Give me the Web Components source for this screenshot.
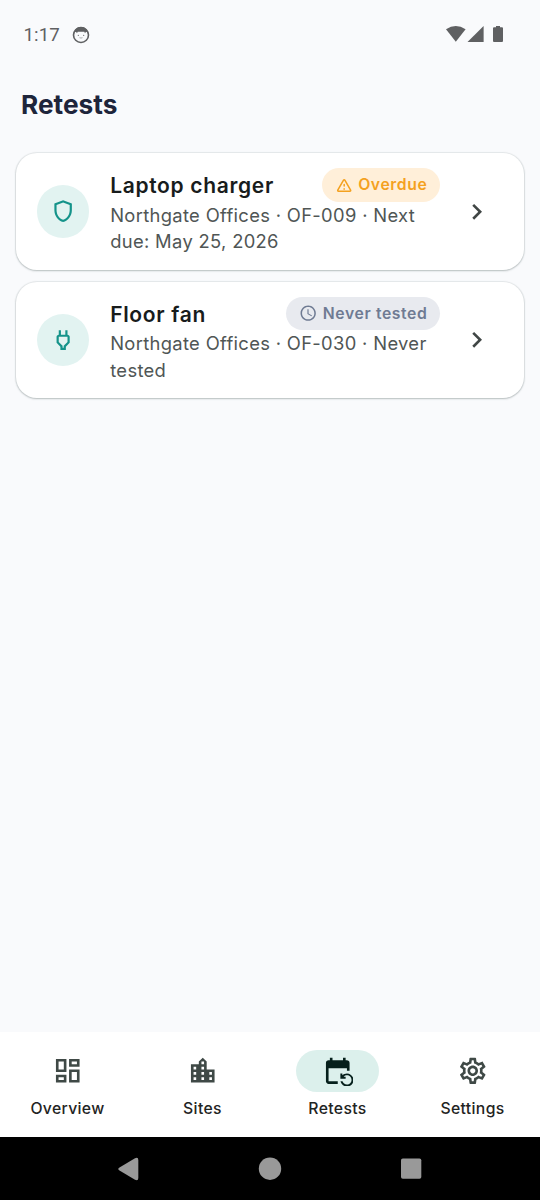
<!DOCTYPE html>
<html lang="en">
<head>
<meta charset="utf-8">
<title>Retests</title>
<style>
html,body{margin:0;height:100%}
body{font-family:Inter,"Liberation Sans",sans-serif;background:#f9fafc;overflow:hidden}
</style>
</head>
<body>
<retest-app></retest-app>
<script>
const ICONS = {
  shield: 'M12 2L4 5v6.09c0 5.05 3.41 9.76 8 10.91 4.59-1.15 8-5.86 8-10.91V5l-8-3zm6 9.09c0 4-2.55 7.7-6 8.83-3.45-1.13-6-4.82-6-8.83v-4.7l6-2.25 6 2.25v4.7z',
  power: 'M16 9v4.66l-3.5 3.51V19h-1v-1.83L8 13.65V9h8m0-6h-2v4h-4V3H8v4h-.01C6.9 6.99 6 7.89 6 8.99v5.52L9.5 18v3h5v-3l3.5-3.51V9c0-1.1-.9-2-2-2V3z',
  warning: 'M12 5.99L19.53 19H4.47L12 5.99M2.74 18c-.77 1.33.19 3 1.73 3h15.06c1.54 0 2.5-1.67 1.73-3L13.73 4.99c-.77-1.33-2.69-1.33-3.46 0L2.74 18zM11 11v2c0 .55.45 1 1 1s1-.45 1-1v-2c0-.55-.45-1-1-1s-1 .45-1 1zm0 5h2v2h-2v-2z',
  schedule: 'M11.99 2C6.47 2 2 6.48 2 12s4.47 10 9.99 10C17.52 22 22 17.52 22 12S17.52 2 11.99 2zM12 20c-4.42 0-8-3.58-8-8s3.58-8 8-8 8 3.58 8 8-3.58 8-8 8zm.5-13H11v6l5.25 3.15.75-1.23-4.5-2.67z',
  chevron: 'M10 6L8.59 7.41 13.17 12l-4.58 4.59L10 18l6-6z',
  dashboard: 'M19 5v2h-4V5h4M9 5v6H5V5h4m10 8v6h-4v-6h4M9 17v2H5v-2h4M21 3h-8v6h8V3zM11 3H3v10h8V3zm10 8h-8v10h8V11zm-10 4H3v6h8v-6z',
  city: 'M15 11V5l-3-3-3 3v2H3v14h18V11h-6zm-8 8H5v-2h2v2zm0-4H5v-2h2v2zm0-4H5V9h2v2zm6 8h-2v-2h2v2zm0-4h-2v-2h2v2zm0-4h-2V9h2v2zm0-4h-2V5h2v2zm6 12h-2v-2h2v2zm0-4h-2v-2h2v2z',
  repeat: 'M21 12V6c0-1.1-.9-2-2-2h-1V2h-2v2H8V2H6v2H5c-1.1 0-2 .9-2 2v14c0 1.1.9 2 2 2h7v-2H5V10h14v2h2zm-5.36 8c.43 1.45 1.77 2.5 3.36 2.5 1.93 0 3.5-1.57 3.5-3.5s-1.57-3.5-3.5-3.5c-.95 0-1.82.38-2.45 1H18V18h-4v-4h1.5v1.43c.9-.88 2.14-1.43 3.5-1.43 2.76 0 5 2.24 5 5s-2.24 5-5 5c-2.42 0-4.44-1.72-4.9-4h1.54z',
  settings: 'M19.43 12.98c.04-.32.07-.64.07-.98 0-.34-.03-.66-.07-.98l2.11-1.65c.19-.15.24-.42.12-.64l-2-3.46c-.09-.16-.26-.25-.44-.25-.06 0-.12.01-.17.03l-2.49 1c-.52-.4-1.08-.73-1.69-.98l-.38-2.65C14.46 2.18 14.25 2 14 2h-4c-.25 0-.46.18-.49.42l-.38 2.65c-.61.25-1.17.59-1.69.98l-2.49-1c-.06-.02-.12-.03-.18-.03-.17 0-.34.09-.43.25l-2 3.46c-.13.22-.07.49.12.64l2.11 1.65c-.04.32-.07.65-.07.98 0 .33.03.66.07.98l-2.11 1.65c-.19.15-.24.42-.12.64l2 3.46c.09.16.26.25.44.25.06 0 .12-.01.17-.03l2.49-1c.52.4 1.08.73 1.69.98l.38 2.65c.03.24.24.42.49.42h4c.25 0 .46-.18.49-.42l.38-2.65c.61-.25 1.17-.59 1.69-.98l2.49 1c.06.02.12.03.18.03.17 0 .34-.09.43-.25l2-3.46c.12-.22.07-.49-.12-.64l-2.11-1.65zm-1.98-1.71c.04.31.05.52.05.73 0 .21-.02.43-.05.73l-.14 1.13.89.7 1.08.84-.7 1.21-1.27-.51-1.04-.42-.9.68c-.43.32-.84.56-1.25.73l-1.06.43-.16 1.13-.2 1.35h-1.4l-.19-1.35-.16-1.13-1.06-.43c-.43-.18-.83-.41-1.23-.71l-.91-.7-1.06.43-1.27.51-.7-1.21 1.08-.84.89-.7-.14-1.13c-.03-.31-.05-.54-.05-.74s.02-.43.05-.73l.14-1.13-.89-.7-1.08-.84.7-1.21 1.27.51 1.04.42.9-.68c.43-.32.84-.56 1.25-.73l1.06-.43.16-1.13.2-1.35h1.39l.19 1.35.16 1.13 1.06.43c.43.18.83.41 1.23.71l.91.7 1.06-.43 1.27-.51.7 1.21-1.07.85-.89.7.14 1.13zM12 8c-2.21 0-4 1.79-4 4s1.79 4 4 4 4-1.79 4-4-1.79-4-4-4zm0 6c-1.1 0-2-.9-2-2s.9-2 2-2 2 .9 2 2-.9 2-2 2z'
};
const define = (name, render) => customElements.define(name, class extends HTMLElement {
  connectedCallback() {
    if (this.shadowRoot) return;
    this.attachShadow({mode: 'open'}).innerHTML = render(this);
  }
});

define('md-icon', el => `<style>:host{display:block;flex:none;width:var(--size,31.5px);height:var(--size,31.5px)}svg{display:block;width:100%;height:100%}</style>
<svg viewBox="0 0 24 24" fill="currentColor"><path d="${ICONS[el.getAttribute('name')]}"/></svg>`);

define('status-bar', () => `<style>
:host{display:flex;align-items:center;height:68px;padding:0 36px 0 23.500px;box-sizing:border-box;color:#5f6062;font:400 18.7px/24px Roboto,sans-serif}
.time{letter-spacing:.1px;margin-top:2px}.face{margin-left:12.500px;margin-top:1px}svg{display:block}.right{margin-left:auto;display:flex;align-items:center}
</style>
<span class="time">1:17</span>
<svg class="face" width="18" height="18" viewBox="0 0 18 18"><circle cx="9" cy="9" r="7.5" fill="none" stroke="currentColor" stroke-width="1.6"/><path d="M2.300 5.500Q4 1 9 1t6.700 4.500L13.600 6.200 13 7.300 12.300 5.800H5.700L5 7.300 4.400 6.200z" fill="currentColor"/><circle cx="6.300" cy="9.300" r=".6" fill="currentColor"/><circle cx="11.700" cy="9.300" r=".6" fill="currentColor"/><path d="M7.500 11.700q1.500.7 3 0" fill="none" stroke="currentColor" stroke-width=".5"/></svg>
<div class="right"><svg width="58" height="18" viewBox="0 0 58 18" fill="currentColor"><path d="M0 4.2Q9.8-2.3 19.6 4.2L9.8 16.8z"/><path d="M37.6 1v16H21.5z"/><path d="M50 1h4v1.3h2q1 0 1 1V16q0 1-1 1h-8q-1 0-1-1V3.300q0-1 1-1h2z"/></svg></div>`);

define('app-title', () => `<style>:host{display:block;box-sizing:border-box;padding:20px 21px 0;height:85px;font-weight:700;font-size:26.25px;line-height:34px;letter-spacing:0;color:#1e253b}</style><slot></slot>`);

define('status-badge', el => `<style>
:host{display:flex;flex:none;align-items:center;height:33.500px;box-sizing:border-box;padding:0 13px;gap:5px;border-radius:17px;font-weight:600;font-size:15.75px;line-height:21px;letter-spacing:.6px;background:#e8eaef;color:#6f7b93;--size:18.375px}
:host([tone=warn]){background:#ffefd9;color:#f4a11f}
span{margin-right:-.6px;margin-top:-1px}
</style><md-icon name="${el.getAttribute('icon')}"></md-icon><span><slot></slot></span>`);

define('retest-card', el => `<style>
:host{display:flex;align-items:center;box-sizing:border-box;height:116.600px;padding:0 31.7px 0 20.700px;background:#fff;border-radius:21px;box-shadow:0 0 1px 1px rgba(70,90,90,.11),0 1px 2px 0 rgba(60,80,80,.28)}
.avatar{flex:none;width:52.5px;height:52.5px;border-radius:50%;background:#e2f3f1;color:#14938a;display:grid;place-items:center;--size:26.25px}
.body{flex:1;min-width:0;margin:0 21px}
.head{display:flex;align-items:center;justify-content:space-between;height:33.700px}
.name{font-weight:600;font-size:21px;line-height:31px;letter-spacing:.67px;margin-top:1px;color:#181c1c}
.sub{font-size:18.375px;line-height:26.25px;letter-spacing:.33px;color:#505655}
.chev{color:#404645}
</style>
<div class="avatar"><md-icon name="${el.getAttribute('icon')}"></md-icon></div>
<div class="body"><div class="head"><div class="name"><slot name="name"></slot></div><slot name="badge"></slot></div><div class="sub"><slot></slot></div></div>
<md-icon class="chev" name="chevron"></md-icon>`);

define('nav-item', el => `<style>
:host{display:flex;flex:1;flex-direction:column;align-items:center;padding-top:17.500px;color:#3f4946}
.pill{width:83.500px;height:42px;border-radius:21px;display:grid;place-items:center}
:host([active]) .pill{background:#dcf0ec;color:#06201c}
.label{margin-top:6.500px;font-weight:500;font-size:15.75px;line-height:21px;letter-spacing:.34px;color:#1f2423;white-space:nowrap}
</style><div class="pill"><md-icon name="${el.getAttribute('icon')}"></md-icon></div><div class="label"><slot></slot></div>`);

define('system-bar', () => `<style>:host{display:grid;grid-template-columns:repeat(3,141.200px);justify-content:center;place-items:center;height:63px;background:#000}svg{display:block}</style>
<svg width="24" height="24" viewBox="0 0 24 24" fill="#999"><path d="M2.500 10.500 18 1.300q3.300-1.500 3.300 1.700v18q0 3.200-3.300 1.700L2.500 13.500q-2.500-1.500 0-3z"/></svg>
<svg width="24" height="24"><circle cx="12" cy="11.700" r="11.2" fill="#999"/></svg>
<svg width="24" height="24"><rect x="2" y="1.500" width="20.300" height="20.300" rx="1.800" fill="#999"/></svg>`);

define('retest-app', () => `<style>
:host{display:flex;flex-direction:column;height:1200px;width:540px;background:#f9fafc}
main{flex:1;display:flex;flex-direction:column;gap:12px;padding:0 16px}
nav{display:flex;height:105px;background:#fff}
</style>
<status-bar></status-bar>
<app-title>Retests</app-title>
<main>
<retest-card icon="shield"><span slot="name">Laptop charger</span><status-badge slot="badge" tone="warn" icon="warning">Overdue</status-badge>Northgate Offices · OF-009 · Next due: May 25, 2026</retest-card>
<retest-card icon="power"><span slot="name">Floor fan</span><status-badge slot="badge" icon="schedule">Never tested</status-badge>Northgate Offices · OF-030 · Never tested</retest-card>
</main>
<nav><nav-item icon="dashboard">Overview</nav-item><nav-item icon="city">Sites</nav-item><nav-item icon="repeat" active>Retests</nav-item><nav-item icon="settings">Settings</nav-item></nav>
<system-bar></system-bar>`);
</script>
</body>
</html>
